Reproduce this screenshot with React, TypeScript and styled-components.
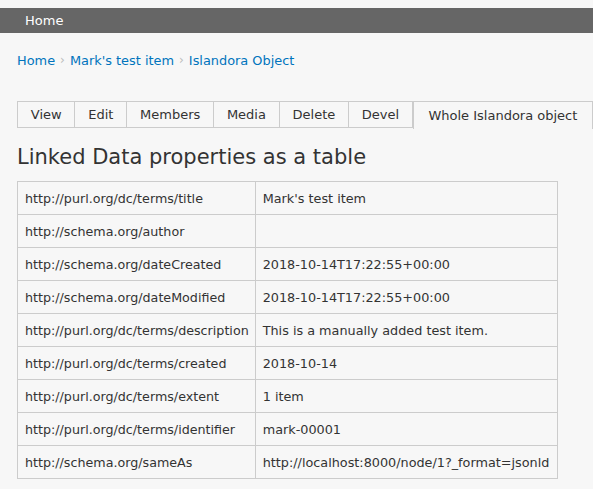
import React from "react";
import styled, { createGlobalStyle } from "styled-components";

const Global = createGlobalStyle`
  html, body { margin: 0; padding: 0; background: #f7f7f7; }
  body { font-family: "DejaVu Sans", sans-serif; color: #333; }
`;

const Page = styled.div`
  padding-top: 8px;
`;

const TopBar = styled.div`
  background: #666;
  height: 25px;
  display: flex;
  align-items: center;
  padding-left: 25px;
`;

const TopLink = styled.a`
  color: #fff;
  font-size: 13px;
  text-decoration: none;
`;

const Main = styled.div`
  padding: 0 0 0 17px;
`;

const Crumbs = styled.nav`
  display: flex;
  align-items: center;
  margin-top: 18px;
  height: 18px;
  font-size: 12.9px;
`;

const Crumb = styled.a`
  color: #0074bd;
  text-decoration: none;
`;

const Sep = styled.span`
  color: #bbb;
  font-size: 12px;
  margin: 0 5px;
`;

const Tabs = styled.ul`
  list-style: none;
  margin: 32px 0 0 0;
  padding: 0;
  display: flex;
`;

const Tab = styled.li<{ $active?: boolean; $first?: boolean }>`
  box-sizing: border-box;
  height: ${(p) => (p.$active ? 28 : 27)}px;
  border: 1px solid #ccc;
  border-left: ${(p) => (p.$first || p.$active ? "1px solid #ccc" : "none")};
  border-bottom: ${(p) => (p.$active ? "none" : "1px solid #ccc")};
  padding: 0 ${(p) => (p.$active ? 14.5 : 12.8)}px;
  display: flex;
  align-items: center;
  font-size: 13px;
  color: #333;
  white-space: nowrap;
`;

const Heading = styled.h1`
  font-size: 21px;
  font-weight: normal;
  margin: 16px 0 0 0;
  line-height: 24px;
  color: #333;
`;

const Table = styled.table`
  border-collapse: collapse;
  margin-top: 12px;
  font-size: 12.7px;
`;

const Cell = styled.td<{ $value?: boolean }>`
  border: 1px solid #ccc;
  height: 33px;
  box-sizing: border-box;
  padding: 0 ${(p) => (p.$value ? 8 : 6)}px 0 7px;
  font-size: ${(p) => (p.$value ? 12.8 : 12.7)}px;
  white-space: nowrap;
  color: #333;
`;

const rows: [string, string][] = [
  ["http://purl.org/dc/terms/title", "Mark's test item"],
  ["http://schema.org/author", ""],
  ["http://schema.org/dateCreated", "2018-10-14T17:22:55+00:00"],
  ["http://schema.org/dateModified", "2018-10-14T17:22:55+00:00"],
  ["http://purl.org/dc/terms/description", "This is a manually added test item."],
  ["http://purl.org/dc/terms/created", "2018-10-14"],
  ["http://purl.org/dc/terms/extent", "1 item"],
  ["http://purl.org/dc/terms/identifier", "mark-00001"],
  ["http://schema.org/sameAs", "http://localhost:8000/node/1?_format=jsonld"],
];

const tabs = ["View", "Edit", "Members", "Media", "Delete", "Devel", "Whole Islandora object"];

export default function App() {
  return (
    <Page>
      <Global />
      <TopBar>
        <TopLink href="#">Home</TopLink>
      </TopBar>
      <Main>
        <Crumbs>
          <Crumb href="#">Home</Crumb>
          <Sep>›</Sep>
          <Crumb href="#">Mark's test item</Crumb>
          <Sep>›</Sep>
          <Crumb href="#">Islandora Object</Crumb>
        </Crumbs>
        <Tabs>
          {tabs.map((t, i) => (
            <Tab key={t} $first={i === 0} $active={i === tabs.length - 1}>
              {t}
            </Tab>
          ))}
        </Tabs>
        <Heading>Linked Data properties as a table</Heading>
        <Table>
          <tbody>
            {rows.map(([k, v]) => (
              <tr key={k}>
                <Cell>{k}</Cell>
                <Cell $value>{v}</Cell>
              </tr>
            ))}
          </tbody>
        </Table>
      </Main>
    </Page>
  );
}
